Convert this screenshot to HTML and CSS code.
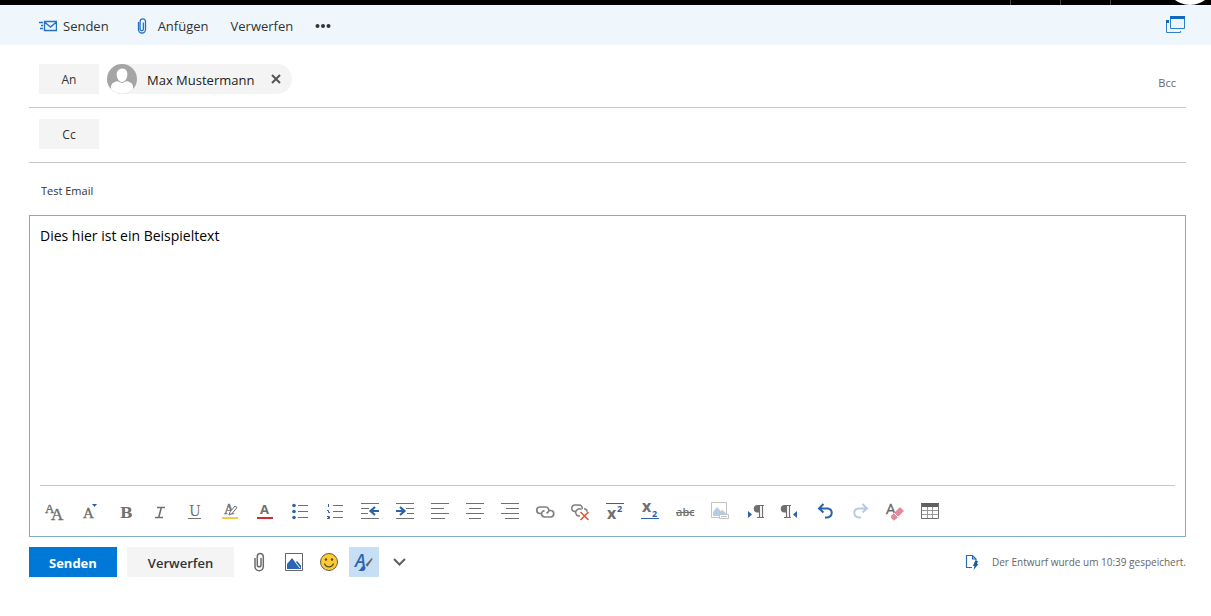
FILE: index.html
```html
<!DOCTYPE html>
<html lang="de">
<head>
<meta charset="utf-8">
<title>Neue Nachricht</title>
<link rel="stylesheet" href="styles.css">
</head>
<body>
<header class="suite-bar">
  <span class="suite-slot"></span><span class="suite-slot"></span><span class="suite-slot"></span>
  <svg class="suite-avatar" viewBox="0 0 50 5"><circle cx="25" cy="-20" r="25" fill="#fff"/></svg>
</header>
<nav class="command-bar">
  <button class="command command-send" type="button">
    <svg width="18" height="12" viewBox="0 0 18 12" fill="none" stroke="#2472c8"><path d="M5.5 1.5h12v9h-12zM5.5 2l6 5 6-5" stroke-width="1.4"/><path d="M0 2.5h4M2 5.5h2M1 8.5h3" stroke-width="1.3"/></svg>
    Senden</button>
  <button class="command command-attach" type="button">
    <svg width="10" height="16" viewBox="0 0 10 16" fill="none" stroke="#2472c8" stroke-width="1.3"><path d="M1.5 4v7.500a3.500 3.500 0 0 0 7 0V3.500a2.700 2.700 0 0 0-5.400 0v7.500a1.500 1.500 0 0 0 3.300 0V4.500"/></svg>
    Anfügen</button>
  <button class="command" type="button">Verwerfen</button>
  <button class="command" type="button" aria-label="Weitere Befehle"><svg width="16" height="6" viewBox="0 0 16 6" fill="#333"><circle cx="2.5" cy="3" r="2"/><circle cx="8" cy="3" r="2"/><circle cx="13.5" cy="3" r="2"/></svg></button>
  <button class="command command-popout" type="button" aria-label="In neuem Fenster öffnen"><svg width="20" height="18" viewBox="0 0 20 18"><path d="M4.500 1.500h14v11h-14z" fill="#edf5fc" stroke="#2b7fcb"/><path d="M4 0h15v3H4z" fill="#0f6cbd"/><path d="M.5 5v11.500h14V15" fill="none" stroke="#2b7fcb"/><path d="M0 4h3v3H0z" fill="#0f6cbd"/></svg></button>
</nav>
<main class="compose">
  <section class="recipient-row">
    <button class="field-button" type="button">An</button>
    <div class="persona">
      <svg class="persona-photo" viewBox="0 0 30 30"><defs><clipPath id="round"><circle cx="15" cy="15" r="15"/></clipPath></defs><g clip-path="url(#round)"><path d="M0 0h30v30H0z" fill="#a5a5a5"/><path d="M4 30v-7c0-5 5-6 11-6s11 1 11 6v7z" fill="#fff"/><path d="M9 10.500C9 6.500 11.500 4 15 4s6 2.500 6 6.500-2.500 8-6 8-6-4-6-8z" fill="#fff" stroke="#a5a5a5" stroke-width="1.2"/></g></svg>
      <span class="persona-name">Max Mustermann</span>
      <button class="persona-remove" type="button" aria-label="Entfernen"><svg width="10" height="10" viewBox="0 0 10 10"><path d="M1 1l8 8M9 1l-8 8" stroke="#555" stroke-width="2"/></svg></button>
    </div>
    <button class="bcc" type="button">Bcc</button>
  </section>
  <section class="recipient-row">
    <button class="field-button" type="button">Cc</button>
  </section>
  <input class="subject" type="text" aria-label="Betreff" value="Test Email">
  <section class="editor">
    <textarea class="message" aria-label="Nachricht">Dies hier ist ein Beispieltext</textarea>
    <div class="format-bar">
      <button type="button" aria-label="Schriftart"><svg viewBox="0 0 20 20" fill="#707070" class="slab"><text x="0" y="12" font-size="13">A</text><text x="6" y="19" font-size="17">A</text></svg></button>
      <button type="button" aria-label="Schriftgrad"><svg viewBox="0 0 20 20" fill="#707070" class="slab"><text x="3" y="17" font-size="15">A</text><path d="M12 3h5l-2.500 3z" fill="#2b62a8"/></svg></button>
      <button type="button" aria-label="Fett"><svg viewBox="0 0 20 20" fill="#707070" class="serif bold"><text x="5" y="17" font-size="15">B</text></svg></button>
      <button type="button" aria-label="Kursiv"><svg viewBox="0 0 20 20" fill="none" stroke="#707070" stroke-width="1.6"><path d="M7 6.500h8M5 16.500h8M11.300 6.500l-2.600 10"/></svg></button>
      <button type="button" aria-label="Unterstrichen"><svg viewBox="0 0 20 20" fill="#707070" class="serif"><text x="4" y="15" font-size="14">U</text><path d="M3 17h13v1H3z"/></svg></button>
      <button type="button" aria-label="Hervorheben"><svg viewBox="0 0 20 20" fill="#707070" class="slab"><text x="4" y="13" font-size="14">A</text><path d="M9 14l1-3 5-6 2 1.500-5 6z" fill="#fff" stroke="#707070"/><path d="M2 16h16v2H2z" fill="#f6c944"/></svg></button>
      <button type="button" aria-label="Schriftfarbe"><svg viewBox="0 0 20 20" fill="#707070" class="sans bold"><text x="5" y="13" font-size="13">A</text><path d="M2 16h16v2H2z" fill="#d42a38"/></svg></button>
      <button type="button" aria-label="Aufzählung"><svg viewBox="0 0 20 20"><path d="M8 4.500h10M8 10.500h10M8 16.500h10" stroke="#707070"/><g fill="#2b62a8"><circle cx="4" cy="4.500" r="1.800"/><circle cx="4" cy="10.500" r="1.800"/><circle cx="4" cy="16.500" r="1.800"/></g></svg></button>
      <button type="button" aria-label="Nummerierung"><svg viewBox="0 0 20 20"><path d="M8 4.500h10M8 10.500h10M8 16.500h10" stroke="#707070"/><path d="M3.500 3v3M2 9.500h1.500v2H5M2 15.500h2.500v2H2M3 16.500h2" fill="none" stroke="#2b62a8"/></svg></button>
      <button type="button" aria-label="Einzug verkleinern"><svg viewBox="0 0 20 20" fill="none"><path d="M1 2.500h18M1 7.500h8M1 12.500h7M1 17.500h18" stroke="#707070"/><path d="M19 10h-7.500M15 6l-4.500 4 4.500 4" stroke="#2b62a8" stroke-width="2.200"/></svg></button>
      <button type="button" aria-label="Einzug vergrößern"><svg viewBox="0 0 20 20" fill="none"><path d="M1 2.500h18M11 7.500h8M12 12.500h7M1 17.500h18" stroke="#707070"/><path d="M1 10h7.500M5 6l4.500 4L5 14" stroke="#2b62a8" stroke-width="2.200"/></svg></button>
      <button type="button" aria-label="Linksbündig"><svg viewBox="0 0 20 20"><path d="M1 2.500h18M1 7.500h13M1 12.500h18M1 17.500h14" stroke="#707070"/></svg></button>
      <button type="button" aria-label="Zentriert"><svg viewBox="0 0 20 20"><path d="M1 2.500h18M4 7.500h12M1 12.500h18M4 17.500h12" stroke="#707070"/></svg></button>
      <button type="button" aria-label="Rechtsbündig"><svg viewBox="0 0 20 20"><path d="M1 2.500h18M6 7.500h13M1 12.500h18M5 17.500h14" stroke="#707070"/></svg></button>
      <button type="button" aria-label="Link einfügen"><svg viewBox="0 0 20 20" fill="none" stroke="#808080" stroke-width="1.700"><path d="M7 12.500H5A3.200 3.200 0 0 1 5 6h5.500a3.200 3.200 0 0 1 2.500 5.300l-1.500 1"/><path d="M13.500 9.500H15.500a3.200 3.200 0 0 1 0 6.500H9.500a3.200 3.200 0 0 1-2-5.500l2-1"/></svg></button>
      <button type="button" aria-label="Link entfernen"><svg viewBox="0 0 20 20" fill="none" stroke="#808080" stroke-width="1.500"><path d="M6 10.500H4.500A3.300 3.300 0 0 1 4.500 4H9a3.200 3.200 0 0 1 3.200 4"/><path d="M14 7.800c2 0 3 1.500 3 3M10 15H8.500a3.500 3.500 0 0 1-1-6.500c1-.8 3-.8 4 0"/><path d="M10.500 11l8 8M18.500 11l-8 8" stroke="#e2582c" stroke-width="1.600"/></svg></button>
      <button type="button" aria-label="Hochgestellt"><svg viewBox="0 0 20 20" fill="#707070" class="sans bold"><path d="M1 2h18v1H1z" fill="#2b62a8"/><text x="2" y="18" font-size="16">x</text><text x="12" y="11" font-size="9" fill="#2b62a8">2</text></svg></button>
      <button type="button" aria-label="Tiefgestellt"><svg viewBox="0 0 20 20" fill="#707070" class="sans bold"><path d="M1 17h18v1H1z" fill="#2b62a8"/><text x="2" y="11" font-size="16">x</text><text x="12" y="16" font-size="9" fill="#2b62a8">2</text></svg></button>
      <button type="button" aria-label="Durchgestrichen"><svg viewBox="0 0 20 20" fill="#707070" class="sans semibold"><text x="1" y="15" font-size="11">abc</text><path d="M1 11h18v1H1z"/></svg></button>
      <button type="button" aria-label="Alternativtext" disabled><svg viewBox="0 0 20 20"><path d="M1.500 1.500h15v15h-15z" fill="#fff" stroke="#c4c4c4"/><path d="M3 15v-4l4-5 4 4.500 1-2 4 4V15z" fill="#b6cbe4"/><path d="M9.500 13.500h9v4h-9z" fill="#fff" stroke="#c4c4c4"/><path d="M11 15.500h6" stroke="#c4c4c4"/></svg></button>
      <button type="button" aria-label="Von links nach rechts"><svg viewBox="0 0 20 20"><path d="M3 10l4 3.500L3 17z" fill="#2b62a8"/><path d="M19 4.500h-6M14.500 4v13M17.500 4v13M12 16.500h7" fill="none" stroke="#707070" stroke-width="1.200"/><path d="M14 4h-1.500a3.500 3.500 0 0 0 0 7.500H14z" fill="#707070"/></svg></button>
      <button type="button" aria-label="Von rechts nach links"><svg viewBox="0 0 20 20"><path d="M17 10l-4 3.500L17 17z" fill="#2b62a8"/><path d="M11 4.500H5M6.500 4v13M9.500 4v13M4 16.500h7" fill="none" stroke="#707070" stroke-width="1.200"/><path d="M6 4H4.500a3.500 3.500 0 0 0 0 7.500H6z" fill="#707070"/></svg></button>
      <button type="button" aria-label="Rückgängig"><svg viewBox="0 0 20 20" fill="none" stroke="#2b62a8" stroke-width="2"><path d="M8.500 3L4 7.500 8.500 11.500M4 7.500h9c5 1 5 8-.5 9H10"/></svg></button>
      <button type="button" aria-label="Wiederholen" disabled><svg viewBox="0 0 20 20" fill="none" stroke="#b6cbe4" stroke-width="2"><path d="M12.500 3L17 7.500 12.500 11.500M17 7.500H8c-5 1-5 8 .5 9H11"/></svg></button>
      <button type="button" aria-label="Formatierung löschen"><svg viewBox="0 0 20 20" fill="#666" class="sans"><text x="1" y="13" font-size="15" stroke="#666" stroke-width=".3">A</text><path d="M6 15l9-9 4 4-9 9-1.500.5L6 17z" fill="#e58a9b"/><path d="M9 12l4 4" stroke="#fff"/></svg></button>
      <button type="button" aria-label="Tabelle einfügen"><svg viewBox="0 0 20 20"><path d="M1 2h18v4H1z" fill="#606060"/><path d="M1.500 3v14.500h17V3" fill="none" stroke="#707070"/><path d="M2 9.500h16M2 13.500h16M7.500 6v11M12.500 6v11" stroke="#999"/></svg></button>
    </div>
  </section>
  <footer class="actions">
    <button class="action action-primary" type="button">Senden</button>
    <button class="action" type="button">Verwerfen</button>
    <div class="insert-bar">
      <button type="button" aria-label="Datei anfügen"><svg viewBox="0 0 20 20" fill="none" stroke="#6b6b6b" stroke-width="1.500"><path d="M6 6v8.500a4 4 0 0 0 8.300 0V4.500a3 3 0 0 0-6 0V13a1.800 1.800 0 0 0 3.700 0V6"/></svg></button>
      <button type="button" aria-label="Bild einfügen"><svg viewBox="0 0 20 20"><path d="M1.500 1.500h17v17h-17z" fill="#fff" stroke="#666"/><path d="M3 17v-5l5-6 3.500 4.500L13 9l4 4.500V17z" fill="#2b65b0"/><path d="M11 9.500l5 6.500" stroke="#fff"/></svg></button>
      <button type="button" aria-label="Emoji einfügen"><svg viewBox="0 0 20 20"><circle cx="10" cy="10" r="8.500" fill="#fccb32" stroke="#665d43"/><circle cx="7" cy="7.500" r="1.200" fill="#554d38"/><circle cx="13" cy="7.500" r="1.200" fill="#554d38"/><path d="M5.500 11.500c1.500 4.500 7.500 4.500 9 0" fill="none" stroke="#554d38" stroke-width="1.200"/></svg></button>
      <button class="selected" type="button" aria-label="Formatierung ausblenden"><svg viewBox="0 0 20 20" class="sans semibold slanted"><text x="1" y="15" font-size="18" fill="#2b65b0">A</text><path d="M11 13l7-7.500 1 1.500-5.500 8z" fill="#666" stroke="#c7dff4" stroke-width=".6"/><path d="M4 19c3-1 3-5 6-5 3 1 1 5-1 5z" fill="#2b65b0"/></svg></button>
      <button type="button" aria-label="Weitere Optionen"><svg viewBox="0 0 20 20"><path d="M5 7l5.500 5.500L16 7" fill="none" stroke="#606060" stroke-width="2"/></svg></button>
    </div>
    <p class="draft-status"><svg width="14" height="16" viewBox="0 0 14 16"><path d="M7 13.500H1.500v-12h6l3.500 3.500v3M7.500 1.500V5H11" fill="none" stroke="#2b6cb0" stroke-width="1.200"/><path d="M10 7h3l-1 3h1.500L8.500 16l1-4H8z" fill="#155ea8"/></svg>Der Entwurf wurde um 10:39 gespeichert.</p>
  </footer>
</main>
</body>
</html>
```
FILE: styles.css
```css
* {
  box-sizing: border-box;
}

body {
  margin: 0;
  min-height: 100vh;
  display: flex;
  flex-direction: column;
  background: #fff;
  color: #333;
  font-family: "Open Sans", "Noto Sans", sans-serif;
  font-size: 13px;
}

button {
  display: flex;
  align-items: center;
  justify-content: center;
  padding: 0;
  border: 0;
  background: none;
  color: inherit;
  font: inherit;
}

svg {
  flex: none;
}

.suite-bar {
  display: flex;
  justify-content: flex-end;
  height: 5px;
  background: #000;
}

.suite-slot {
  width: 50px;
  border-left: 1px solid #444;
}

.suite-avatar {
  width: 50px;
  height: 5px;
  margin: 0 -4px 0 5px;
}

.command-bar {
  display: flex;
  align-items: center;
  gap: 22px;
  height: 40px;
  padding: 0 25px 0 39px;
  background: #eff6fc;
}

.command {
  gap: 6px;
  height: 40px;
  padding-top: 2px;
}

.command-attach {
  gap: 11px;
  margin-left: 6px;
}

.command-popout {
  margin-left: auto;
  padding-top: 0;
}

.compose {
  flex: 1;
  display: flex;
  flex-direction: column;
  padding: 8px 25px 39px 29px;
}

.recipient-row {
  display: flex;
  align-items: center;
  gap: 8px;
  padding: 11px 10px 13px;
  border-bottom: 1px solid #c8c8c8;
}

.field-button {
  width: 60px;
  height: 30px;
  background: #f4f4f4;
  font-size: 12px;
}

.persona {
  display: flex;
  align-items: center;
  gap: 10px;
  height: 30px;
  padding-right: 6px;
  border-radius: 15px;
  background: #f4f4f4;
  color: #222;
}

.persona-name {
  padding: 2px 2px 0 0;
}

.persona-photo {
  width: 30px;
  height: 30px;
}

.persona-remove {
  width: 20px;
  height: 20px;
}

.bcc {
  margin-left: auto;
  padding-top: 6px;
  color: #666;
  font-size: 11px;
}

.subject {
  width: 100%;
  height: 52px;
  padding: 2px 12px 0;
  border: 0;
  outline: 0;
  background: none;
  color: #333;
  font: inherit;
  font-size: 11px;
}

.editor {
  flex: 1;
  display: flex;
  flex-direction: column;
  padding: 10px;
  border: 1px solid #7fadc2;
}

.message {
  flex: 1;
  width: 100%;
  padding: 0;
  border: 0;
  outline: 0;
  resize: none;
  color: #000;
  font: inherit;
  font-size: 14px;
  line-height: 20px;
}

.format-bar {
  display: flex;
  gap: 5px;
  padding-top: 10px;
  border-top: 1px solid #c8c8c8;
}

.format-bar button,
.insert-bar button {
  width: 30px;
  height: 30px;
}

.format-bar svg,
.insert-bar svg {
  width: 20px;
  height: 20px;
  overflow: visible;
}

.slab {
  font-family: "Liberation Serif", serif;
  stroke: #707070;
  stroke-width: .4px;
}

.serif {
  font-family: "DejaVu Serif", serif;
}

.sans {
  font-family: "Open Sans", sans-serif;
}

.semibold {
  font-weight: 600;
}

.bold {
  font-weight: 700;
}

.slanted {
  font-style: italic;
}

.slab path {
  stroke-width: 1px;
}

.slab path:not([stroke]) {
  stroke: none;
}

.actions {
  display: flex;
  align-items: center;
  gap: 10px;
  padding-top: 10px;
}

.action {
  height: 30px;
  padding: 2px 21px 0;
  background: #f4f4f4;
  font-weight: 600;
}

.action-primary {
  padding: 2px 20px 0;
  background: #0078d7;
  color: #fff;
  font-weight: 700;
}

.insert-bar {
  display: flex;
  gap: 5px;
}

.insert-bar .selected {
  background: #c7dff4;
}

.draft-status {
  display: flex;
  align-items: center;
  gap: 13px;
  margin: 0 0 0 auto;
  color: #666;
  font-size: 10px;
}
```
